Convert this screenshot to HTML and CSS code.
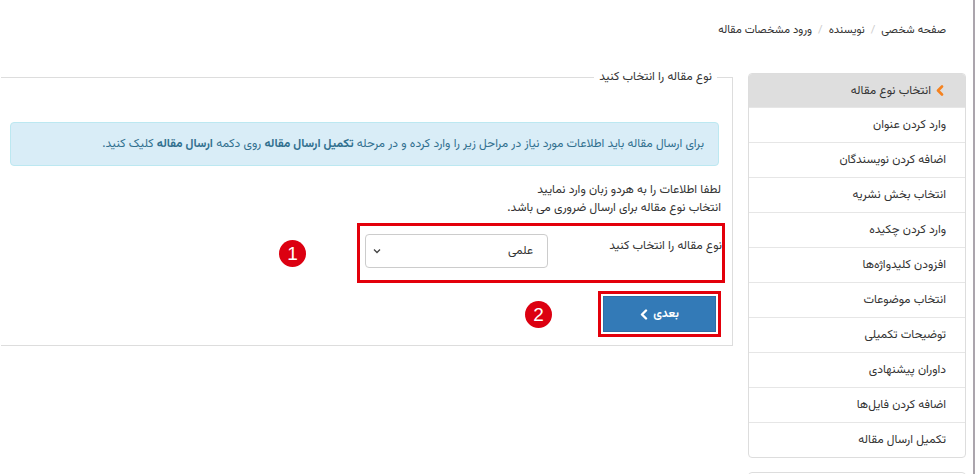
FILE: index.html
```html
<!DOCTYPE html>
<html lang="fa" dir="rtl">
<head>
<meta charset="utf-8">
<title>ورود مشخصات مقاله</title>
<link rel="stylesheet" href="styles.css">
</head>
<body>
<div class="frame">
  <nav class="breadcrumb">
    <a href="#">صفحه شخصی</a>
    <span class="sep">/</span>
    <a href="#">نویسنده</a>
    <span class="sep">/</span>
    <span class="current">ورود مشخصات مقاله</span>
  </nav>

  <div class="page">
    <aside class="side">
      <ul class="steps">
        <li class="step active">
          <svg class="step-chev" width="8" height="11" viewBox="0 0 8 11"><polyline points="6,1.5 2,5.5 6,9.5" fill="none" stroke="#f5821f" stroke-width="2.6" stroke-linecap="round" stroke-linejoin="round"/></svg>
          <span>انتخاب نوع مقاله</span>
        </li>
        <li class="step">وارد کردن عنوان</li>
        <li class="step">اضافه کردن نویسندگان</li>
        <li class="step">انتخاب بخش نشریه</li>
        <li class="step">وارد کردن چکیده</li>
        <li class="step">افزودن کلیدواژه‌ها</li>
        <li class="step">انتخاب موضوعات</li>
        <li class="step">توضیحات تکمیلی</li>
        <li class="step">داوران پیشنهادی</li>
        <li class="step">اضافه کردن فایل‌ها</li>
        <li class="step">تکمیل ارسال مقاله</li>
      </ul>
      <div class="side-next"></div>
    </aside>

    <main class="main">
      <fieldset class="box">
        <legend class="box-title">نوع مقاله را انتخاب کنید</legend>
        <div class="alert"><span>برای ارسال مقاله باید اطلاعات مورد نیاز در مراحل زیر را وارد کرده و در مرحله <b>تکمیل ارسال مقاله</b> روی دکمه <b>ارسال مقاله</b> کلیک کنید.</span></div>
        <p class="note">لطفا اطلاعات را به هردو زبان وارد نمایید<br>انتخاب نوع مقاله برای ارسال ضروری می باشد.</p>

        <div class="annot-row row-1">
          <div class="mark">
            <div class="form-group">
              <label class="form-label">نوع مقاله را انتخاب کنید</label>
              <div class="select">
                <span class="select-value">علمی</span>
                <svg class="select-caret" width="8" height="6" viewBox="0 0 8 6"><polyline points="1,1.5 4,4.5 7,1.5" fill="none" stroke="#444" stroke-width="1.3"/></svg>
              </div>
            </div>
          </div>
          <span class="badge">1</span>
        </div>

        <div class="annot-row row-2">
          <div class="mark mark-btn">
            <button class="btn">بعدی
              <svg width="8" height="11" viewBox="0 0 8 11"><polyline points="6,1.5 2,5.5 6,9.5" fill="none" stroke="#fff" stroke-width="2.4" stroke-linecap="round" stroke-linejoin="round"/></svg>
            </button>
          </div>
          <span class="badge">2</span>
        </div>
      </fieldset>
    </main>
  </div>
</div>
</body>
</html>
```
FILE: styles.css
```css
* { box-sizing: border-box; }
html, body { margin: 0; padding: 0; background: #fff; }
body {
  font-family: "Vazirmatn", "Vazir", "Noto Sans Arabic", "DejaVu Sans", sans-serif;
  font-size: 12px;
  color: #333;
  overflow: hidden;
}
.frame {
  width: 974px;
  height: 474px;
  border-right: 2px solid #aba5ad;
  overflow: hidden;
}
.breadcrumb {
  padding: 22px 27px 0 0;
  height: 73px;
  line-height: 18px;
  font-size: 11.2px;
}
.breadcrumb a { color: #333; text-decoration: none; }
.breadcrumb .sep { color: #ccc; padding: 0 3px; }
.page {
  display: flex;
  gap: 15px;
  padding-right: 7px;
}
.side { width: 218px; flex: none; }
.steps {
  list-style: none;
  margin: 0;
  padding: 0;
  border: 1px solid #ddd;
  border-radius: 4px;
  overflow: hidden;
}
.step {
  height: 35px;
  padding: 0 19px;
  display: flex;
  align-items: center;
  gap: 5px;
  border-bottom: 1px solid #e6e6e6;
  line-height: 18px;
}
.step:last-child { border-bottom: 0; height: 34px; }
.step.active { background: #dedede; padding-right: 21px; height: 34px; }
.step-chev { flex: none; }
.side-next {
  margin-top: 14px;
  height: 20px;
  border: 1px solid #ddd;
  border-radius: 4px;
}
.main { width: 737px; flex: none; }
.box {
  margin: -4px 0 0 0;
  border: 1px solid #ddd;
  padding: 0 13px 8px 13px;
  min-width: 0;
}
.box-title {
  padding: 0 5px;
  margin-right: 2px;
  font-size: 12px;
  line-height: 16px;
}
.alert {
  margin-top: 37px;
  background: #d9edf7;
  border: 1px solid #bce8f1;
  border-radius: 4px;
  color: #31708f;
  height: 44px;
  padding: 0 14px;
  display: flex;
  align-items: center;
  line-height: 18px;
}
.note {
  margin: 15px -2px 0 0;
  line-height: 18px;
}
.annot-row {
  display: flex;
  align-items: center;
}
.row-1 { margin: 6px -6px 0 0; gap: 51px; }
.row-2 { margin: 8px -2px 0 0; gap: 46px; }
.mark {
  border: 3px solid #e3000b;
}
.form-group {
  width: 362px;
  height: 54px;
  display: flex;
  align-items: flex-start;
  padding: 8px 0 0 5px;
}
.form-label { width: 174px; flex: none; padding-top: 3px; line-height: 18px; }
.select {
  width: 184px;
  height: 34px;
  border: 1px solid #ccc;
  border-radius: 4px;
  display: flex;
  align-items: center;
  justify-content: space-between;
  padding: 0 14px 0 7px;
}
.select-caret { flex: none; }
.badge {
  width: 27px;
  height: 27px;
  border-radius: 50%;
  background: #dc0011;
  color: #fff;
  font-family: "Liberation Sans", Arial, sans-serif;
  font-size: 19px;
  line-height: 27px;
  text-align: center;
  flex: none;
}
.mark-btn { padding: 2px; }
.btn {
  width: 113px;
  height: 36px;
  background: #337ab7;
  border: 1px solid #2e6da4;
  color: #fff;
  font: inherit;
  font-weight: bold;
  display: flex;
  align-items: center;
  justify-content: center;
  gap: 5px;
  direction: rtl;
}
```
